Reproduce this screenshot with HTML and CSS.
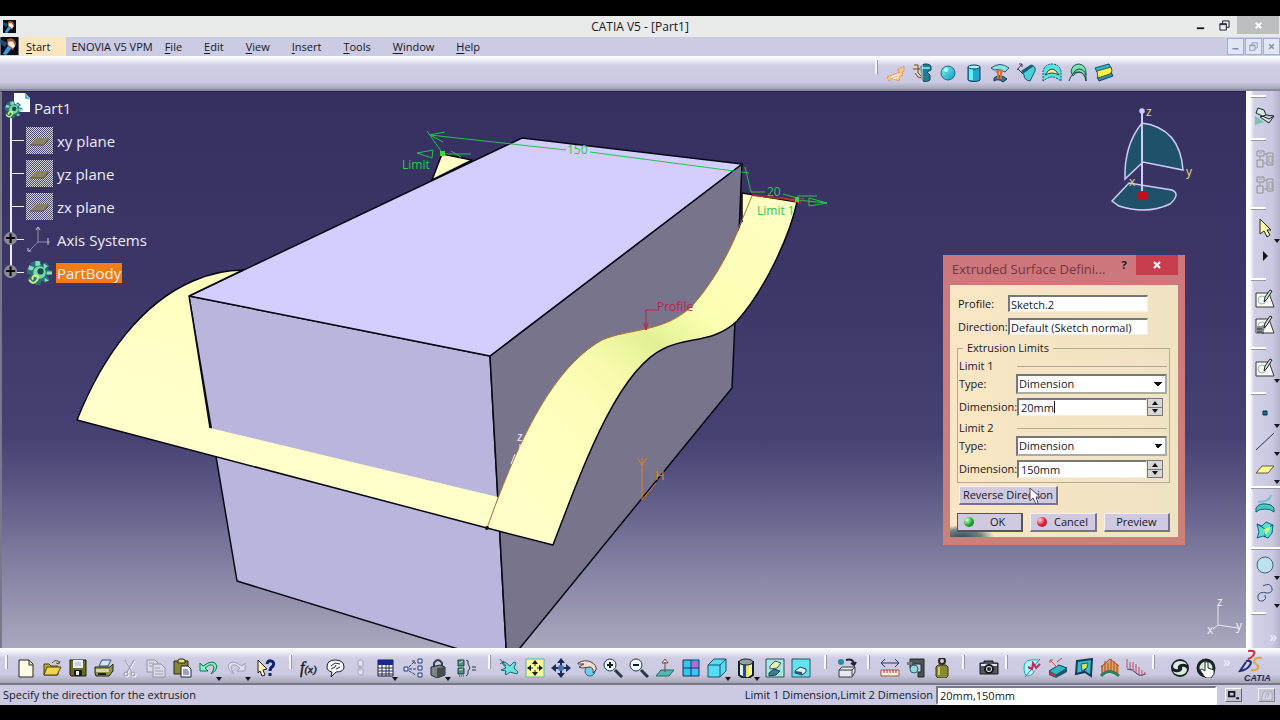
FILE: index.html
```html
<!DOCTYPE html>
<html lang="en">
<head>
<meta charset="utf-8">
<title>CATIA V5 - [Part1]</title>
<link rel="stylesheet" href="styles.css">
</head>
<body>
<svg class="sprite" aria-hidden="true">
  <defs>
    <linearGradient id="cyan" x1="0" y1="0" x2="1" y2="1"><stop offset="0" stop-color="#7ff4fa"/><stop offset="1" stop-color="#1596b8"/></linearGradient>
    <symbol id="app" viewBox="0 0 16 16"><rect width="16" height="16" fill="#070b16"/><path d="M0 2l6 3-2 4-4-3z" fill="#1a4a74"/><path d="M2 15 7 7l3 3-5 6z" fill="#3b9bdc"/><path d="M6 2c4-2 7 0 8 4l-3 6-5-5z" fill="#a8552f"/><path d="M7 4l4 0 2 4-2 2-4-3z" fill="#fff3e2"/></symbol>
    <symbol id="extrude" viewBox="0 0 20 20"><path d="M1 14 14 9l-3-2 7-4v5l-2 1 1 3-3 1-1 5-6-2-4 2z" fill="#f6c590" stroke="#ee8e3d" stroke-dasharray="2 1"/><path d="M5 14l9-3M7 16l6-2" stroke="#fff"/></symbol>
    <symbol id="revolve" viewBox="0 0 20 20"><path d="M9 4c0-4 10-4 10 0v3l-4 2 3 3v5c-3 2-7 2-8 0z" fill="#1d7f95" stroke="#173a4b"/><path d="M10 4h8v2h-8z" fill="#58dcee"/><path d="M1 6h7M2 2h4v8l5 5-5-1-3-4" fill="#f6d8a5" stroke="#5a4938"/><path d="M10 0v19" stroke="#e9eef5"/></symbol>
    <symbol id="sphere" viewBox="0 0 20 20"><circle cx="10" cy="10" r="7" fill="url(#cyan)" stroke="#176e83"/><circle cx="8" cy="7" r="2" fill="#c1ffff"/></symbol>
    <symbol id="cylinder" viewBox="0 0 20 20"><path d="M4 4v13c2 2 10 2 12 0V4" fill="#20a8cc" stroke="#0e3658"/><path d="M5 5h4v12H5z" fill="#64eef5"/><ellipse cx="10" cy="4" rx="6" ry="2" fill="#9bf9ff" stroke="#0e3658"/></symbol>
    <symbol id="offset" viewBox="0 0 20 20"><path d="M1 5Q10-2 19 5l-4 4Q10 5 4 7z" fill="#78e8ed" stroke="#355367"/><path d="M4 15q6-5 13 1l-4 3q-5-4-9-1z" fill="#267996" stroke="#173552"/><path d="M8 8v8m3-8v8M6 9l4-2 3 2" stroke="#d3703a" fill="none" stroke-width="2"/></symbol>
    <symbol id="sweep" viewBox="0 0 20 20"><path d="M1 7 6 1M3 1h3v3" stroke="#502d4d" fill="none"/><path d="M2 6l5 5" stroke="#2b3c53"/><path d="M6 8l9-6q5 1 4 6l-5 10q-6-1-6-6z" fill="#4cd0de" stroke="#175169"/><path d="M5 8l10-6 3 1-10 7z" fill="#1b5d78"/></symbol>
    <symbol id="fill" viewBox="0 0 20 20"><path d="M1 18V8q2-7 9-7t9 7v10l-3-2q-6-4-12 0z" fill="#54e2e6" stroke="#10516b" stroke-dasharray="2 1"/><path d="M3 12Q10 0 17 12q-7-4-14 0z" fill="#fff889" stroke="#353e31"/></symbol>
    <symbol id="multi" viewBox="0 0 20 20"><path d="M3 9Q4 1 11 1q7 1 7 9l0 8q-1-8-6-9-5 0-7 4z" fill="#7be0b1" stroke="#1b5b51"/><path d="M5 11q2-5 6-5 5 0 7 6M1 18q3-10 10-9 6 1 7 9" fill="none" stroke="#1b4b41"/></symbol>
    <symbol id="blend" viewBox="0 0 20 20"><path d="M1 5l14-4 2 4-14 4z" fill="#2cb7d9" stroke="#145171"/><path d="M3 14l14-5 2 4-14 5z" fill="#2a93ad" stroke="#12465b"/><path d="M3 8l14-4 1 4-2 3-12 4z" fill="#f6f24e" stroke="#52591b"/></symbol>
    <symbol id="new" viewBox="0 0 20 20"><path d="M3 2h10l4 4v13H3z" fill="#fffde6" stroke="#29281e"/><path d="M13 2v5h4" fill="#ddd" stroke="#29281e"/></symbol>
    <symbol id="open" viewBox="0 0 20 20"><path d="M2 17V6h5l2 2h7v9z" fill="#c8a824" stroke="#493e18"/><path d="M2 17 5 9h14l-4 8z" fill="#f0d64a" stroke="#493e18"/><path d="M10 5q3-4 6-2l1 2m-3 0 3 1 1-3" fill="none" stroke="#62542a"/></symbol>
    <symbol id="save" viewBox="0 0 20 20"><path d="M2 2h16v16H3l-1-1z" fill="#6b6b23" stroke="#171b16"/><path d="M5 2h10v8H5z" fill="#e8f2fb"/><path d="M6 12h8v6H6z" fill="#151a1c"/><path d="M8 13h3v4H8z" fill="#eee"/><path d="M7 5h6m-6 2h6" stroke="#a9b5bc"/></symbol>
    <symbol id="print" viewBox="0 0 20 20"><path d="M5 8l3-6h9l-3 6z" fill="#cfe5fa" stroke="#345168"/><path d="M1 9h15l3-3v7l-4 5H2l-1-3z" fill="#8f8f52" stroke="#24251f"/><path d="M2 11h13v3H2z" fill="#d7d6a0"/><path d="M4 16h8" stroke="#202020" stroke-width="2"/></symbol>
    <symbol id="cut" viewBox="0 0 20 20"><g fill="none" stroke="#fff" transform="translate(1 1)"><path d="M5 2l7 12M14 2 7 14"/><circle cx="6" cy="16" r="2"/><circle cx="13" cy="16" r="2"/></g><g fill="none" stroke="#9395aa"><path d="M5 2l7 12M14 2 7 14"/><circle cx="6" cy="16" r="2"/><circle cx="13" cy="16" r="2"/></g></symbol>
    <symbol id="copy" viewBox="0 0 20 20"><g fill="#dcdbeb" stroke="#9092a8"><path d="M1 2h8l3 3v9H1z"/><path d="M7 6h8l4 4v9H7z"/></g><path d="M9 10h5m-5 3h8m-8 3h8M3 5h5M3 8h3" stroke="#999bae"/></symbol>
    <symbol id="paste" viewBox="0 0 20 20"><path d="M2 3h14v13H2z" fill="#86863a" stroke="#262716"/><path d="M6 2l2-1h3l2 1v3H6z" fill="#e6dc78" stroke="#25251a"/><path d="M9 8h7l3 3v8H9z" fill="#f5f7ff" stroke="#1f2641"/><path d="M11 12h5m-5 2h6m-6 2h6" stroke="#465180"/></symbol>
    <symbol id="undo" viewBox="0 0 20 20"><path d="M2 5v8h8L7 10q7-6 9-1 0 3-3 7 6-3 6-8Q16 0 5 8z" fill="#7ff4bb" stroke="#127556"/></symbol>
    <symbol id="redo" viewBox="0 0 20 20"><path d="M18 5v8h-8l3-3Q6 4 4 9q0 3 3 7-6-3-6-8Q4 0 15 8z" fill="#dfdfee" stroke="#a1a2b6"/></symbol>
    <symbol id="whats" viewBox="0 0 20 20"><path d="M11 6q1-4 4-3 4 1 2 5-3 2-3 5m0 2v3" fill="none" stroke="#10216b" stroke-width="3"/><path d="M2 2l9 9-4 1 2 5-3 1-2-5-2 2z" fill="#fff6b3" stroke="#1d1e27"/></symbol>
    <symbol id="fx" viewBox="0 0 20 20"><text x="0" y="15" class="formula">f<tspan class="formula-arg">(x)</tspan></text></symbol>
    <symbol id="comment" viewBox="0 0 20 20"><path d="M2 9q0-7 8-7 9 0 9 7 0 5-8 5l-5 5 1-5q-5-1-5-5z" fill="#f7f8fc" stroke="#191d26"/><path d="M6 8l4-3 5 1M6 11l4-2 1-2m0 4 4-2" stroke="#26302e" fill="none"/></symbol>
    <symbol id="chain" viewBox="0 0 20 20"><g fill="#e3e2f0" stroke="#a3a5b7"><rect x="8" y="2" width="5" height="7" rx="2"/><rect x="8" y="10" width="5" height="7" rx="2"/><path d="M10 7v6"/></g></symbol>
    <symbol id="table" viewBox="0 0 20 20"><path d="M3 2h15v16H3z" fill="#fff" stroke="#151a3b"/><path d="M3 2h15v5H3z" fill="#172991"/><path d="M3 10h15M3 13h15M3 16h15M7 7v11m4-11v11m3-11v11" stroke="#242b4e"/></symbol>
    <symbol id="rules" viewBox="0 0 20 20"><path d="M1 9h4v4H1zM15 1h4v4h-4zM15 8h4v4h-4zM15 15h4v4h-4z" fill="#d5ddff" stroke="#2b407e" stroke-width="1"/><path d="M6 9l6-6M6 11h8m-8 2 7 4M9 3h3v3" stroke="#28404c" stroke-dasharray="3 1" fill="none"/></symbol>
    <symbol id="lock" viewBox="0 0 20 20"><path d="M6 9V5q4-6 8 0v4" fill="none" stroke="#3a4146" stroke-width="2"/><path d="M3 9l9-2 5 2v8l-8 3-6-3z" fill="#7c858a" stroke="#24272a"/><path d="M9 10l8-1v8l-8 3z" fill="#454d51"/></symbol>
    <symbol id="equiv" viewBox="0 0 20 20"><path d="M2 2h6v6H2zM2 10h6v6H2z" fill="#3f958c" stroke="#223e43"/><path d="M3 5l4-2m-4 9 4-1" stroke="#dfe56d"/><path d="M10 2q3 0 2 4l2 4-2 3q1 4-2 5m6-9h4m-4 3h4" fill="none" stroke="#2b343a"/><path d="M3 18h6" stroke="#26303a" stroke-dasharray="1 1"/></symbol>
    <symbol id="fly" viewBox="0 0 20 20"><path d="M2 12l5-2-4-5 3-1 5 4 4-4 2 1-2 5 4 4-1 2-7-2-4 3-1-1 1-3z" fill="#6de4db" stroke="#1d6572"/><path d="M1 1l6 7M1 6l4-3" stroke="#30597a"/></symbol>
    <symbol id="fit" viewBox="0 0 20 20"><path d="M1 1h18v18H1z" fill="#faf999" stroke="#5eb6a5"/><path d="M10 4v4m0 4v4M4 10h4m4 0h4" stroke="#161f26"/><path d="M10 2l3 4H7zM10 18l3-4H7zM2 10l4-3v6zM18 10l-4-3v6z" fill="#161f26"/></symbol>
    <symbol id="pan" viewBox="0 0 20 20"><path d="M10 2v16M2 10h16" stroke="#162c5e" stroke-width="2"/><path d="M10 0 6 5h8zM10 20l-4-5h8zM0 10l5-4v8zM20 10l-5-4v8z" fill="#162c5e"/><circle cx="10" cy="10" r="3" fill="#4672b3"/></symbol>
    <symbol id="rotate" viewBox="0 0 20 20"><circle cx="13" cy="13" r="5" fill="#72cee9" stroke="#1a6483"/><path d="M1 5q7-4 13-1 6 3 5 8l-3 3q1-5-3-6l-8 1-3-1 5-3H1z" fill="#f4ddd0" stroke="#56414a"/></symbol>
    <symbol id="zoomin" viewBox="0 0 20 20"><path d="M12 12l7 7" stroke="#28383e" stroke-width="3"/><circle cx="7" cy="7" r="6" fill="#edf9ff" stroke="#273c49" stroke-width="1"/><path d="M7 4v6M4 7h6" stroke="#12191c" stroke-width="2"/></symbol>
    <symbol id="zoomout" viewBox="0 0 20 20"><path d="M12 12l7 7" stroke="#28383e" stroke-width="3"/><circle cx="7" cy="7" r="6" fill="#edf9ff" stroke="#273c49" stroke-width="1"/><path d="M4 7h6" stroke="#12191c" stroke-width="2"/></symbol>
    <symbol id="normal" viewBox="0 0 20 20"><path d="M1 18l5-6h13l-5 6z" fill="#53b9ac" stroke="#236966"/><path d="M10 14V4M7 5l3-4 3 4z" fill="#fff" stroke="#754548"/></symbol>
    <symbol id="quad" viewBox="0 0 20 20"><path d="M2 2h16v16H2z" fill="#34c8ee" stroke="#142c68"/><path d="M11 3h6v6h-6z" fill="#b46ad3"/><path d="M10 2v16M2 10h16" stroke="#142c68"/></symbol>
    <symbol id="iso" viewBox="0 0 20 20"><path d="M1 7l6-6h12v12l-6 6H1z" fill="#55ddf5" stroke="#155267"/><path d="M1 7h12v12M13 7l6-6" stroke="#155267" fill="none"/></symbol>
    <symbol id="shade" viewBox="0 0 20 20"><path d="M3 4v13l3 2h8l3-2V4z" fill="#dff8d8" stroke="#161c21" stroke-width="2"/><path d="M7 6h3v13H7z" fill="#2340c4"/><path d="M10 6h3v13h-3z" fill="#f2e94b"/><ellipse cx="10" cy="4" rx="7" ry="3" fill="#91a2a3" stroke="#161c21"/></symbol>
    <symbol id="hide" viewBox="0 0 20 20"><path d="M1 1h18v18H1z" fill="#a5e9df" stroke="#294e54"/><path d="M5 8l5-5 6 2-4 5-7 1z" fill="#f4efb4" stroke="#405d52"/><path d="M4 15l5-4 6 2-4 4-7 1z" fill="#357f91" stroke="#214251"/></symbol>
    <symbol id="swap" viewBox="0 0 20 20"><path d="M1 1h18v18H1z" fill="#62e4ee" stroke="#295363"/><path d="M4 13l5-4 6 2v3l-4 3-7-2z" fill="#dceff1" stroke="#263e57"/><path d="M4 13l7 1v3l-7-2z" fill="#2b5870"/></symbol>
    <symbol id="copyprint" viewBox="0 0 20 20"><circle cx="4" cy="4" r="3" fill="#268aa0"/><path d="M9 2q7-2 8 4m-3-1 3 2 2-3" fill="none" stroke="#1c252c" stroke-width="2"/><path d="M2 12l3-3h13v5l-3 5H2z" fill="#e7e9ee" stroke="#35393d"/><path d="M2 12h13v6m0-6 3-3" fill="none" stroke="#35393d"/></symbol>
    <symbol id="measure" viewBox="0 0 20 20"><path d="M1 5h18M5 1 1 5l4 4M15 1l4 4-4 4" fill="none" stroke="#26366a" stroke-width="1"/><path d="M1 12h18v6H1z" fill="#fbeeda" stroke="#a45249"/><path d="M4 12v3m3-3v3m3-3v3m3-3v3m3-3v3" stroke="#a13b3b"/></symbol>
    <symbol id="caliper" viewBox="0 0 20 20"><path d="M4 1h14v18h-6v-5h3V6H8v4H4z" fill="#4b555a" stroke="#22262a"/><circle cx="8" cy="11" r="4" fill="#92d7d9" stroke="#245d6a"/><path d="M1 4h5v3H1z" fill="#727c82"/></symbol>
    <symbol id="weight" viewBox="0 0 20 20"><circle cx="10" cy="3" r="3" fill="none" stroke="#2c2c18" stroke-width="2"/><path d="M6 7h8l2 2v9l-2 2H6l-2-2V9z" fill="#898833" stroke="#36340f"/><path d="M7 9v8" stroke="#d1ce71" stroke-width="2"/></symbol>
    <symbol id="camera" viewBox="0 0 20 20"><path d="M1 5h4V3h9v2h5v11H1z" fill="#53575e" stroke="#16181b"/><path d="M2 6h16v2H2z" fill="#e1e4e7"/><circle cx="10" cy="11" r="4" fill="#dfe6e7" stroke="#13191c" stroke-width="2"/><circle cx="10" cy="11" r="2" fill="#222b37"/></symbol>
    <symbol id="connect" viewBox="0 0 20 20"><path d="M16 2Q2 0 2 9t4 9q6-1 6-6" fill="#b1fbfb" stroke="#29a6b0"/><path d="M3 19 18 1" stroke="#327f9a"/><path d="M6 9l4 2 1-6 3 5 4-4" fill="none" stroke="#b3305e" stroke-width="2"/></symbol>
    <symbol id="draft" viewBox="0 0 20 20"><path d="M1 13l10-6 8 3-11 7z" fill="#2fb8c1" stroke="#173e55"/><path d="M1 13l7 4v3l-7-3zM8 17l11-7v4L8 20z" fill="#22566f"/><path d="M2 15l6 3" stroke="#b63c40" stroke-width="2"/><path d="M2 2l7 7m0-5 5-4M2 2h3M2 2v3" stroke="#c2553b"/></symbol>
    <symbol id="map" viewBox="0 0 20 20"><path d="M3 3l15-2-1 17-6-4-9 2z" fill="#33b9c9" stroke="#163a52" stroke-width="2"/><path d="M7 6l7-1-1 5-5 3z" fill="#cde75d" stroke="#2752a0"/><path d="M3 16q7-2 9-5" fill="none" stroke="#122e7c"/></symbol>
    <symbol id="porcupine" viewBox="0 0 20 20"><path d="M1 17V8l9-6 9 6v9q-9-7-18 0z" fill="#e2a45e"/><path d="M1 18q8-9 18 0" stroke="#24805d" fill="none" stroke-width="3"/><path d="M2 15V7m3 7V3m3 9V5m3 7V1m3 12V3m3 12V6M1 9l9-8 9 7" fill="none" stroke="#a9492a"/></symbol>
    <symbol id="comb" viewBox="0 0 20 20"><path d="M1 11q6 0 9 4 4 4 9 1" fill="none" stroke="#3d2d4a"/><path d="M1 10V1m3 11V4m3 8V4m3 11V6m3 10V9m3 8v-5m3 5v-3" stroke="#bb4964"/></symbol>
    <symbol id="update" viewBox="0 0 20 20"><circle cx="10" cy="10" r="9" fill="#17212a"/><path d="M3 9q0-5 6-6 7 0 8 4-2-2-6-1-4 1-3 5-3 1-5-2zM17 11q0 5-6 6-7 0-8-4 2 2 6 1 4-1 3-5 3-1 5 2z" fill="#dceadb"/></symbol>
    <symbol id="manual" viewBox="0 0 20 20"><circle cx="10" cy="10" r="8" fill="#d7ecd6" stroke="#172322" stroke-width="3"/><path d="M8 18 4 12l2-1 3 2V4h3v6l6 2v4l-3 4h-5z" fill="#fff" stroke="#25292b"/></symbol>
    <symbol id="workbench" viewBox="0 0 20 20"><path d="M0 10v9l9-3z" fill="#7bc3ac"/><path d="M1 7 3 2l6 2 2 5 8 1-5 3-9-4zM11 9 5 11l9 6 5-7" fill="#d8e8df" stroke="#172523"/></symbol>
    <symbol id="body" viewBox="0 0 20 20"><path d="M2 2h7v5H2zm10 2h6v12h-6zM2 11h6v7H2z" fill="#d2d1dc" stroke="#8e8f9c"/><path d="M4 4h3M9 5h3M5 7v4m3 3h4m2-7h3v7h-3z" stroke="#999aa7" fill="none"/></symbol>
    <symbol id="select" viewBox="0 0 20 20"><path d="M5 1v15l4-3 3 6 3-2-3-5h4z" fill="#fff5a6" stroke="#26271f"/></symbol>
    <symbol id="play" viewBox="0 0 20 20"><path d="M8 5l5 5-5 5z" fill="#17171d"/></symbol>
    <symbol id="sketch" viewBox="0 0 20 20"><path d="M1 4h13l5 14H1z" fill="#f8f9f7" stroke="#323a37"/><circle cx="7" cy="11" r="4" fill="none" stroke="#99b8ad"/><path d="M9 13l1-5 5-7 2 1-5 8z" fill="#cddad5" stroke="#1d2b29"/></symbol>
    <symbol id="positioned" viewBox="0 0 20 20"><use href="#sketch"/><path d="M1 11h6v8H1z" fill="#8c9190"/><path d="M8 10v9M2 14h5m-5 3h5" stroke="#222c2c"/></symbol>
    <symbol id="point" viewBox="0 0 20 20"><path d="M8 8h4v4H8z" fill="#08787b" stroke="#12294a"/></symbol>
    <symbol id="line" viewBox="0 0 20 20"><path d="M1 19 19 2" stroke="#25344d"/></symbol>
    <symbol id="plane" viewBox="0 0 20 20"><path d="M1 14l6-7h12l-6 7z" fill="#fbfb9a" stroke="#62602b"/></symbol>
    <symbol id="extract" viewBox="0 0 20 20"><path d="M1 18v-4q3-5 10-4 6 0 8 4v4q-3-3-9-3-6 0-9 3z" fill="#46c7bf" stroke="#17646c"/><path d="M3 8q12 0 13-7" fill="none" stroke="#84bdd0" stroke-width="2"/></symbol>
    <symbol id="join" viewBox="0 0 20 20"><path d="M2 4l5 2 4-4 7 3-1 8-4 5-5-2-6 2 2-6z" fill="#50e5cb" stroke="#126285"/><path d="M2 4l8 5 8-4m-8 4v8" stroke="#1d4dab" fill="none"/><path d="M9 9l6-3v4l-5 5z" fill="#bef88c"/></symbol>
    <symbol id="circle" viewBox="0 0 20 20"><circle cx="10" cy="10" r="8" fill="#bfe0ef" stroke="#3b6580"/></symbol>
    <symbol id="spline" viewBox="0 0 20 20"><path d="M8 3q7-4 9 2 1 5-5 5-8-2-9 3-1 6 5 5 4-2 2-6" fill="none" stroke="#34557d"/></symbol>
    <symbol id="min" viewBox="0 0 12 12"><path d="M2 8h8v2H2z" fill="currentColor"/></symbol>
    <symbol id="max" viewBox="0 0 12 12"><path d="M4 4V1h7v7H8M1 4h7v7H1zM1 5h7" fill="none" stroke="currentColor"/></symbol>
    <symbol id="close" viewBox="0 0 12 12"><path d="M3 3l6 6m0-6-6 6" stroke="currentColor" stroke-width="2"/></symbol>
    <symbol id="gear" viewBox="0 0 26 26"><path d="M9 2h5l1 4 4-3 4 4-3 3 5 1v4l-5 1 3 4-4 3-4-2-1 4H9l-1-4-4 2-3-4 4-3-4-2V9l5-1-2-4 4-2z" fill="#2c6f74"/><path d="M9 2h4l1 4-5 1zM3 6l5 2-2 3-4-1zM17 4l4 3-4 3zM20 12h5v3h-5zM18 18l4 3-4 1z" fill="#7fe0bd"/><circle cx="13" cy="13" r="6" fill="#77dba8"/><circle cx="14" cy="12" r="3" fill="#174953"/><path d="M3 20q4 6 8 0 2-5-3-4-3 2-1 4" fill="none" stroke="#c5ef7e" stroke-width="2"/></symbol>
    <pattern id="mesh" width="2" height="2" patternUnits="userSpaceOnUse"><rect width="1" height="1" fill="#d3d3de"/><rect x="1" y="1" width="1" height="1" fill="#d3d3de"/></pattern>
    <symbol id="treeplane" viewBox="0 0 27 27"><rect width="27" height="27" fill="#4f4c6c"/><rect width="27" height="27" fill="url(#mesh)"/><path d="M4 18l6-7h13l-5 7z" fill="#898263"/><path d="M4 18h14l5-7" stroke="#55514c" fill="none"/></symbol>
    <symbol id="treeaxis" viewBox="0 0 27 27"><path d="M12 1v15h12M12 16 3 25" fill="none" stroke="#8f8e9e"/><path d="M10 4l2-3 2 3m8 8v7M2 22v3h3" fill="none" stroke="#c9c8d5"/></symbol>
  </defs>
</svg>

<div class="window">
  <header class="titlebar">
    <svg class="titlebar-icon"><use href="#app"/></svg>
    <h1 class="titlebar-text">CATIA V5 - [Part1]</h1>
    <div class="window-buttons">
      <button class="win-btn" aria-label="Minimize"><svg><use href="#min"/></svg></button>
      <button class="win-btn" aria-label="Restore"><svg><use href="#max"/></svg></button>
      <button class="win-btn win-close" aria-label="Close"><svg><use href="#close"/></svg></button>
    </div>
  </header>

  <nav class="menubar" aria-label="Main menu">
    <svg class="menu-icon"><use href="#app"/></svg>
    <button class="menu menu-start"><u>S</u>tart</button>
    <button class="menu menu-vpm">ENOVIA V5 VPM</button>
    <button class="menu"><u>F</u>ile</button>
    <button class="menu"><u>E</u>dit</button>
    <button class="menu"><u>V</u>iew</button>
    <button class="menu"><u>I</u>nsert</button>
    <button class="menu"><u>T</u>ools</button>
    <button class="menu"><u>W</u>indow</button>
    <button class="menu"><u>H</u>elp</button>
    <div class="child-buttons">
      <button class="child-btn" aria-label="Minimize document"><svg><use href="#min"/></svg></button>
      <button class="child-btn" aria-label="Restore document"><svg><use href="#max"/></svg></button>
      <button class="child-btn" aria-label="Close document"><svg><use href="#close"/></svg></button>
    </div>
  </nav>

  <div class="toolbar toolbar-top">
    <div class="group group-surfaces">
      <button class="tool" aria-label="Extrude"><svg><use href="#extrude"/></svg></button>
      <button class="tool" aria-label="Revolve"><svg><use href="#revolve"/></svg></button>
      <button class="tool" aria-label="Sphere"><svg><use href="#sphere"/></svg></button>
      <button class="tool" aria-label="Cylinder"><svg><use href="#cylinder"/></svg></button>
      <button class="tool" aria-label="Offset"><svg><use href="#offset"/></svg></button>
      <button class="tool" aria-label="Sweep"><svg><use href="#sweep"/></svg></button>
      <button class="tool" aria-label="Fill"><svg><use href="#fill"/></svg></button>
      <button class="tool" aria-label="Multi-sections surface"><svg><use href="#multi"/></svg></button>
      <button class="tool" aria-label="Blend"><svg><use href="#blend"/></svg></button>
    </div>
  </div>

  <div class="workspace">
    <main class="viewport">
      <svg class="scene" viewBox="2 92 1244 556" preserveAspectRatio="xMinYMin slice" aria-label="3D view of the part">
        <defs>
          <linearGradient id="ribbon" gradientUnits="userSpaceOnUse" x1="770" y1="220" x2="520" y2="520">
            <stop offset="0" stop-color="#ffffc2"/><stop offset="0.3" stop-color="#fbffb0"/><stop offset="0.43" stop-color="#e2f095"/><stop offset="0.56" stop-color="#f7fbac"/><stop offset="0.7" stop-color="#ffffbc"/><stop offset="1" stop-color="#ffffc8"/>
          </linearGradient>
          <linearGradient id="wing" x1="0.8" y1="0" x2="0.4" y2="0.7"><stop offset="0" stop-color="#ebf3a8"/><stop offset="0.4" stop-color="#ffffc0"/><stop offset="1" stop-color="#ffffcc"/></linearGradient>
        </defs>
        <g stroke="#080812" stroke-width="1.5" stroke-linejoin="round">
          <path d="M442 154 472 160 432 180z" fill="#fdffc4"/>
          <path d="M189 296 490 356 507 664 237 581z" fill="#b9b5dc"/>
          <path d="M490 356 742 164 732 388 520 648 507 664z" fill="#77748c"/>
          <path d="M522 138 742 164 490 356 189 296z" fill="#d2ceff"/>
          <path d="M77 420C104 352 144 302 193 281Q218 270 243 270L189 296 210 428 498 497 487 528z" fill="url(#wing)" stroke="none"/>
          <path d="M210 428 189 296 243 270Q218 270 193 281C144 302 104 352 77 420L487 528" fill="none"/>
          <path d="M742 193 797 202C790 235 765 290 737 321 714 343 688 337 665 348 618 369 584 464 553 545L487 528C515 450 549 370 602 340 630 328 665 333 693 305 720 275 735 240 742 222z" fill="url(#ribbon)" stroke="none"/>
          <path d="M742 222V193L797 202C790 235 765 290 737 321 714 343 688 337 665 348 618 369 584 464 553 545L487 528" fill="none"/>
        </g>
        <path d="M487 528C515 450 549 370 602 340 630 328 665 333 693 305 720 275 738 230 752 196" fill="none" stroke="#b17030"/>
        <circle cx="487" cy="528" r="2" fill="#111"/>
        <g fill="none" stroke="#26c04c">
          <path d="M430 135 566 150M590 152 749 173M427 131l14 20M430 135l15-3m-15 3 13 7M417 153l16-3-1 8zM441 154h30m-20-3 10 6M745 167l6 25h14m18 2 14 4M797 196h20M797 200l30 3m-18-5 18 5-18 3z"/>
          <path d="M752 195l44 5" stroke="#9d302b" stroke-width="2"/>
          <path d="M780 197l20 6 4-5-15 2" stroke="#ba382d"/>
        </g>
        <path d="M440 151h5v5h-5zM795 197h4v5h-4z" fill="#31df39"/>
        <g class="dimension"><text x="402" y="169">Limit</text><text x="567" y="154">150</text><text x="767" y="196">20</text><text x="757" y="215">Limit 1</text></g>
        <path d="M657 310h-11v20m-2-7 2 7 2-7" fill="none" stroke="#c31d47"/>
        <text class="profile" x="657" y="311">Profile</text>
        <g stroke="#e47b25" fill="none"><path d="M642 500v-42m-5 0 5 7 5-7m-5 42 14-17"/></g>
        <text class="sketch-axis" x="655" y="480">H</text>
        <text class="axis-label" x="517" y="441">z</text>
        <path d="M520 444v7m-5 3-4 10" stroke="#f7f5e8"/>
        <g stroke="#ceccf5" stroke-width="1.5" fill="#20516b">
          <path d="M1142 123Q1180 128 1183 170L1143 162 1125 179Q1124 145 1142 123z"/>
          <path d="M1112 201 1129 183 1172 190Q1181 194 1170 204 1147 215 1119 206z"/>
          <path d="M1142 111v82" fill="none" stroke-width="2"/><circle cx="1142" cy="111" r="2" fill="#d5d3ff"/>
        </g>
        <rect x="1138" y="191" width="9" height="9" fill="#c1101c"/>
        <g class="compass"><text x="1146" y="116">z</text><text x="1186" y="176">y</text><text x="1129" y="186">x</text></g>
        <path d="M1218 606v19l20 3m-20-3-5 4" fill="none" stroke="#e9e8f3"/>
        <g class="axis-label"><text x="1217" y="606">z</text><text x="1236" y="630">y</text><text x="1207" y="634">x</text></g>
      </svg>

      <ul class="tree">
        <li class="node node-root"><svg class="root-icon" viewBox="0 0 28 28"><path d="M11 1h11l5 5v14H11z" fill="#f7fcff"/><path d="M22 1v6h5z" fill="#53b8d5"/><use href="#gear" x="1" y="8" width="19" height="19"/></svg><span class="node-text">Part1</span></li>
        <li class="node"><svg class="node-icon"><use href="#treeplane"/></svg><span class="node-text">xy plane</span></li>
        <li class="node"><svg class="node-icon"><use href="#treeplane"/></svg><span class="node-text">yz plane</span></li>
        <li class="node"><svg class="node-icon"><use href="#treeplane"/></svg><span class="node-text">zx plane</span></li>
        <li class="node node-closed"><svg class="node-icon"><use href="#treeaxis"/></svg><span class="node-text">Axis Systems</span></li>
        <li class="node node-closed"><svg class="node-icon"><use href="#gear"/></svg><span class="node-text node-active">PartBody</span></li>
      </ul>

      <form class="dialog" role="dialog" aria-labelledby="dialog-title">
        <div class="dialog-head">
          <h2 class="dialog-title" id="dialog-title">Extruded Surface Defini...</h2>
          <button type="button" class="dialog-help" aria-label="Help">?</button>
          <button type="button" class="dialog-close" aria-label="Close dialog"><svg><use href="#close"/></svg></button>
        </div>
        <div class="dialog-body">
          <div class="row-top"><label for="profile">Profile:</label><input class="box" id="profile" type="text" value="Sketch.2"></div>
          <div class="row-top"><label for="direction">Direction:</label><input class="box" id="direction" type="text" value="Default (Sketch normal)"></div>
          <fieldset class="limits">
            <legend>Extrusion Limits</legend>
            <div class="limit-head">Limit 1</div>
            <div class="row"><label for="type1">Type:</label><select class="box" id="type1"><option>Dimension</option></select></div>
            <div class="row row-value"><label for="dim1">Dimension:</label><span class="spinner"><input class="box" id="dim1" type="text" value="20mm"><i class="caret"></i><span class="steps"><button type="button" class="step" aria-label="Increase limit 1"></button><button type="button" class="step step-down" aria-label="Decrease limit 1"></button></span></span></div>
            <div class="limit-head">Limit 2</div>
            <div class="row"><label for="type2">Type:</label><select class="box" id="type2"><option>Dimension</option></select></div>
            <div class="row row-value"><label for="dim2">Dimension:</label><span class="spinner"><input class="box" id="dim2" type="text" value="150mm"><span class="steps"><button type="button" class="step" aria-label="Increase limit 2"></button><button type="button" class="step step-down" aria-label="Decrease limit 2"></button></span></span></div>
          </fieldset>
          <button type="button" class="push push-reverse">Reverse Direction</button>
          <div class="actions">
            <button type="button" class="push push-default"><i class="lamp lamp-green"></i><span>OK</span></button>
            <button type="button" class="push"><i class="lamp lamp-red"></i><span>Cancel</span></button>
            <button type="button" class="push">Preview</button>
          </div>
        </div>
        <svg class="pointer" viewBox="0 0 12 18"><path d="M1 1v13l3-3 3 6 2-1-2-6h4z" fill="#fff" stroke="#504b5c"/></svg>
      </form>
    </main>

    <aside class="sidebar" aria-label="Workbench tools">
      <div class="stack"><button class="tool" aria-label="Generative shape design"><svg><use href="#workbench"/></svg></button></div>
      <div class="stack"><button class="tool" aria-label="Body"><svg><use href="#body"/></svg></button><button class="tool" aria-label="Geometrical set"><svg><use href="#body"/></svg></button></div>
      <div class="stack"><button class="tool drop" aria-label="Select"><svg><use href="#select"/></svg></button><button class="tool" aria-label="Selection filter"><svg><use href="#play"/></svg></button></div>
      <div class="stack"><button class="tool" aria-label="Sketch"><svg><use href="#sketch"/></svg></button><button class="tool" aria-label="Positioned sketch"><svg><use href="#positioned"/></svg></button></div>
      <div class="stack"><button class="tool drop" aria-label="Sketcher"><svg><use href="#sketch"/></svg></button></div>
      <div class="stack stack-tight"><button class="tool drop" aria-label="Point"><svg><use href="#point"/></svg></button><button class="tool drop" aria-label="Line"><svg><use href="#line"/></svg></button><button class="tool drop" aria-label="Plane"><svg><use href="#plane"/></svg></button></div>
      <div class="stack stack-full"><button class="tool" aria-label="Extract"><svg><use href="#extract"/></svg></button><button class="tool" aria-label="Join"><svg><use href="#join"/></svg></button></div>
      <div class="stack stack-full"><button class="tool drop" aria-label="Circle"><svg><use href="#circle"/></svg></button><button class="tool drop" aria-label="Spline"><svg><use href="#spline"/></svg></button></div>
      <div class="stack stack-last"><span class="more">»</span></div>
    </aside>
  </div>

  <div class="toolbar toolbar-bottom">
    <div class="group">
      <button class="tool" aria-label="New"><svg><use href="#new"/></svg></button><button class="tool" aria-label="Open"><svg><use href="#open"/></svg></button><button class="tool" aria-label="Save"><svg><use href="#save"/></svg></button><button class="tool" aria-label="Print"><svg><use href="#print"/></svg></button><button class="tool" aria-label="Cut"><svg><use href="#cut"/></svg></button><button class="tool" aria-label="Copy"><svg><use href="#copy"/></svg></button><button class="tool" aria-label="Paste"><svg><use href="#paste"/></svg></button><button class="tool drop" aria-label="Undo"><svg><use href="#undo"/></svg></button><button class="tool drop" aria-label="Redo"><svg><use href="#redo"/></svg></button><button class="tool" aria-label="What's this"><svg><use href="#whats"/></svg></button>
    </div>
    <div class="group group-knowledge">
      <button class="tool" aria-label="Formula"><svg><use href="#fx"/></svg></button><button class="tool" aria-label="Comment"><svg><use href="#comment"/></svg></button><button class="tool" aria-label="Check links"><svg><use href="#chain"/></svg></button><button class="tool drop" aria-label="Design table"><svg><use href="#table"/></svg></button><button class="tool" aria-label="Rules"><svg><use href="#rules"/></svg></button><button class="tool drop" aria-label="Lock"><svg><use href="#lock"/></svg></button><button class="tool" aria-label="Equivalent dimensions"><svg><use href="#equiv"/></svg></button>
    </div>
    <div class="group">
      <button class="tool" aria-label="Fly"><svg><use href="#fly"/></svg></button><button class="tool" aria-label="Fit all in"><svg><use href="#fit"/></svg></button><button class="tool" aria-label="Pan"><svg><use href="#pan"/></svg></button><button class="tool" aria-label="Rotate"><svg><use href="#rotate"/></svg></button><button class="tool" aria-label="Zoom in"><svg><use href="#zoomin"/></svg></button><button class="tool" aria-label="Zoom out"><svg><use href="#zoomout"/></svg></button><button class="tool" aria-label="Normal view"><svg><use href="#normal"/></svg></button><button class="tool" aria-label="Multi-view"><svg><use href="#quad"/></svg></button><button class="tool drop" aria-label="Isometric view"><svg><use href="#iso"/></svg></button><button class="tool drop" aria-label="Shading"><svg><use href="#shade"/></svg></button><button class="tool" aria-label="Hide or show"><svg><use href="#hide"/></svg></button><button class="tool" aria-label="Swap visible space"><svg><use href="#swap"/></svg></button>
    </div>
    <div class="group group-mid"><button class="tool" aria-label="Quick print"><svg><use href="#copyprint"/></svg></button></div>
    <div class="group group-mid"><button class="tool" aria-label="Measure between"><svg><use href="#measure"/></svg></button><button class="tool" aria-label="Measure item"><svg><use href="#caliper"/></svg></button><button class="tool" aria-label="Measure inertia"><svg><use href="#weight"/></svg></button></div>
    <div class="group group-far"><button class="tool" aria-label="Capture"><svg><use href="#camera"/></svg></button></div>
    <div class="group group-far"><button class="tool" aria-label="Connect checker"><svg><use href="#connect"/></svg></button><button class="tool" aria-label="Draft analysis"><svg><use href="#draft"/></svg></button><button class="tool" aria-label="Surface curvature"><svg><use href="#map"/></svg></button><button class="tool" aria-label="Porcupine analysis"><svg><use href="#porcupine"/></svg></button><button class="tool" aria-label="Curvature comb"><svg><use href="#comb"/></svg></button></div>
    <div class="group group-far group-update"><button class="tool" aria-label="Update all"><svg><use href="#update"/></svg></button><button class="tool" aria-label="Manual update"><svg><use href="#manual"/></svg></button><span class="more">»</span></div>
    <svg class="brand" viewBox="0 0 42 34" aria-label="CATIA"><path d="M10 2q8-1 6 3-1 3-6 5" fill="none" stroke="#c72e3d" stroke-width="2"/><path d="M8 12q7-1 4 4-3 5-10 6l6-9" fill="none" stroke="#272b72" stroke-width="2"/><path d="M24 9q-8-1-8 4l4 4q1 5-7 4" fill="none" stroke="#e2a83b" stroke-width="2"/><text class="brand-text" x="6" y="32">CATIA</text></svg>
  </div>

  <footer class="status">
    <span class="status-message">Specify the direction for the extrusion</span>
    <label class="status-label" for="power">Limit 1 Dimension,Limit 2 Dimension</label>
    <input class="power" id="power" type="text" value="20mm,150mm">
    <button class="status-btn" aria-label="Power input"><svg viewBox="0 0 14 12"><path d="M2 2h6v5H2zM10 9h3" fill="none" stroke="#16171c" stroke-width="2"/></svg></button>
    <button class="status-btn status-off" aria-label="Macro"><svg viewBox="0 0 14 12"><path d="M1 11 4 2h9v9zM5 9l2-5h3L8 9" fill="#dddde9" stroke="#9799a9"/></svg></button>
  </footer>
</div>
</body>
</html>
```
FILE: styles.css
```css
* { box-sizing: border-box; }
body {
  margin: 0;
  background: #000;
  color: #171725;
  font: 11px/16px "Open Sans", "Noto Sans", sans-serif;
}
button, input, select { font: inherit; color: inherit; margin: 0; border-radius: 0; }
button { border: 0; padding: 0; background: none; }
.sprite { position: absolute; width: 0; height: 0; }
.window { display: flex; flex-direction: column; height: 100vh; padding: 16px 0 15px; }

.titlebar { display: flex; align-items: center; height: 21px; flex: none; background: #e9eaea; padding-left: 3px; }
.titlebar-icon { width: 13px; height: 13px; }
.titlebar-text { flex: 1; margin: 0; padding-left: 76px; font-size: 12px; font-weight: 400; text-align: center; }
.window-buttons { display: flex; align-self: flex-start; }
.win-btn { width: 24px; height: 18px; display: grid; place-items: center; }
.win-btn svg { width: 11px; height: 11px; }
.win-close { width: 42px; margin-left: 1px; margin-right: 1px; background: #bdbebf; color: #fff; }

.menubar { display: flex; flex: none; height: 19px; background: #cbcbe4; }
.menu-icon { width: 19px; height: 18px; }
.menu { padding: 0 11px; line-height: 18px; }
.menu u { text-underline-offset: 2px; }
.menu-start { background: #fbe6bf; padding: 0 15px 0 7px; }
.menu-vpm { padding: 0 1px 0 6px; }
.child-buttons { display: flex; gap: 1px; margin-left: auto; padding-top: 1px; }
.child-btn { width: 17px; height: 17px; display: grid; place-items: center; color: #808bad; background: #e1e6f5; border: 1px solid #a1afd1; }
.child-btn svg { width: 9px; height: 9px; }

.toolbar { display: flex; align-items: flex-start; flex: none; background: linear-gradient(#fff, #eeeef7 4px, #cfcde4 10px, #cbcae2 26px, #a5a5b6); }
.toolbar-top { height: 35px; padding-top: 4px; border-bottom: 2px solid #8a8a9a; }
.toolbar-bottom { height: 37px; padding: 7px 0 0 5px; border-bottom: 2px solid #777887; }
.group { position: relative; display: flex; padding-left: 8px; margin-right: 10px; }
.group::before { content: ""; position: absolute; left: 0; top: 0; width: 2px; height: 14px; background: #f6f6fc; border-right: 1px solid #9797a9; }
.group-surfaces { margin-left: auto; margin-right: 163px; }
.tool { position: relative; flex: none; width: 26px; height: 26px; display: grid; place-items: center; }
.tool svg { width: 20px; height: 20px; }
.toolbar .drop { width: 29px; padding-right: 3px; }
.drop::after { content: ""; position: absolute; right: 2px; bottom: 0; border: 3px solid transparent; border-top: 4px solid #15151c; border-bottom: 0; }
.group-knowledge .tool { width: 25px; }
.group-knowledge .drop { width: 28px; }
.group-mid { padding-left: 10px; margin-right: 7px; }
.group-far { padding-left: 14px; margin-right: 3px; }
.group-update { padding-left: 15px; margin-right: 0; flex: 1; }
.more { color: #f4f4fc; font-size: 15px; line-height: 12px; }
.group-update .more { padding-left: 4px; }
.formula { font: italic 16px "Liberation Serif", serif; fill: #15151c; stroke: #15151c; stroke-width: 0.4px; }
.formula-arg { font-size: 11px; }
.brand { width: 42px; height: 34px; margin: -6px 0 0; overflow: visible; }
.brand-text { font: italic bold 9px "Liberation Sans", sans-serif; fill: #252a62; }

.workspace { display: flex; flex: 1; min-height: 0; }
.viewport { position: relative; flex: 1; min-width: 0; overflow: hidden; border-left: 2px solid #777888; border-top: 1px solid #25214a; background: linear-gradient(#363061, #3d3769 35%, #454173 62%, #5a5783 71%, #8583a3 86%, #a9a8bf); }
.scene { position: absolute; inset: 0; width: 100%; height: 100%; }
.scene text { font-family: "Open Sans", "Noto Sans", sans-serif; }
.dimension { font-size: 12px; fill: #2dc74b; }
.profile { font-size: 12px; fill: #c51d49; }
.sketch-axis { font-size: 13px; fill: #e47b25; }
.compass { font-size: 12px; fill: #e2de7a; }
.axis-label { font-size: 12px; fill: #f0eff8; }

.tree { position: relative; display: inline-block; margin: -1px 0 0; padding: 0 0 0 4px; list-style: none; color: #ededf7; font-size: 15px; line-height: 20px; }
.tree::before { content: ""; position: absolute; left: 8px; top: 26px; bottom: 16px; width: 2px; background: #ededf7; }
.node { position: relative; display: flex; align-items: center; height: 33px; padding-left: 20px; gap: 3px; }
.node::before { content: ""; position: absolute; left: 5px; top: 16px; width: 13px; height: 1px; background: #ededf7; }
.node-root { padding-left: 0; gap: 2px; }
.node-root::before { display: none; }
.node-icon { width: 27px; height: 27px; }
.root-icon { width: 28px; height: 28px; margin: 0 0 4px -3px; }
.node-closed::after { content: "+"; position: absolute; left: -2px; top: 9px; width: 13px; height: 13px; border-radius: 50%; background: #8a8a96; color: #050509; font: bold 18px/12px "Liberation Sans", sans-serif; text-align: center; }
.node-text { padding: 0 1px; }
.node-active { background: #f27d17; }

.dialog { position: absolute; top: 163px; right: 61px; width: 242px; padding: 0 7px 8px; background: linear-gradient(#cd777c, #c9827a); }
.dialog-head { display: flex; height: 30px; }
.dialog-title { flex: 1; margin: 0; padding: 6px 0 0 2px; color: #7b333d; font-size: 13px; line-height: 17px; font-weight: 400; white-space: nowrap; }
.dialog-help { width: 24px; height: 20px; font-weight: 700; }
.dialog-close { width: 42px; height: 20px; display: grid; place-items: center; background: #c83d4d; color: #fff; }
.dialog-close svg { width: 12px; height: 12px; }
.dialog-body { padding: 10px 8px 5px; background: radial-gradient(ellipse 32px 12px at 12px 100%, #3a4c5d, #71807f 60%, transparent), linear-gradient(90deg, #f9e6c4, #efe3c4); }
.row, .row-top { display: grid; grid-template-columns: 57px 1fr; align-items: center; }
.row label, .row-top label { white-space: nowrap; }
.box { width: 100%; min-width: 0; height: 17px; padding: 0 1px; background: #fff; border: 1px solid #f7f0df; border-top: 2px solid #777; border-left: 2px solid #777; outline: 0; }
.row-top { grid-template-columns: 50px 140px; height: 17px; margin-bottom: 6px; }
.limits { position: relative; margin: 0 0 3px -1px; padding: 3px 2px 0 1px; border: 1px solid #b5aa93; }
.limits legend { padding: 0 4px; margin-left: 4px; line-height: 14px; }
.limit-head { display: flex; align-items: center; gap: 23px; height: 16px; }
.limit-head::after { content: ""; flex: 1; border-top: 1px solid #b5aa93; }
.row { height: 20px; }
.row-value { height: 26px; }
select.box { appearance: none; height: 20px; border: 2px solid #777; border-right-color: #aaa; border-bottom-color: #aaa; background: linear-gradient(45deg, transparent 50%, #111 50%) right 7px center / 4px 4px no-repeat, linear-gradient(-45deg, transparent 50%, #111 50%) right 3px center / 4px 4px no-repeat, #fff; }
.spinner { position: relative; display: flex; height: 18px; padding: 0 4px 0 1px; }
.spinner .box { flex: 1; height: 18px; padding: 0 2px; }
.caret { position: absolute; left: 38px; top: 3px; width: 1px; height: 12px; background: #111; }
.steps { display: flex; flex-direction: column; width: 16px; border: 1px solid #777; }
.step { flex: 1; display: grid; place-items: center; background: #d9d6d8; border-bottom: 1px solid #777; }
.step::before { content: ""; border: 3px solid transparent; border-top: 0; border-bottom: 4px solid #111; }
.step-down { border-bottom: 0; }
.step-down::before { border: 3px solid transparent; border-bottom: 0; border-top: 4px solid #111; }
.push { display: flex; align-items: center; justify-content: center; height: 19px; flex: 1; background: #cfcadf; border: 1px solid #f5f0f4; border-right: 2px solid #77738c; border-bottom: 2px solid #77738c; }
.push span { flex: 1; }
.push-reverse { width: 99px; margin-left: 1px; }
.actions { display: flex; gap: 7px; margin-top: 8px; margin-left: -1px; }
.push-default { border-color: #555262; }
.lamp { width: 10px; height: 10px; margin-left: 6px; border-radius: 50%; }
.lamp-green { background: radial-gradient(circle at 3px 3px, #d7ffd2, #2aac35 50%, #116020); }
.lamp-red { background: radial-gradient(circle at 3px 3px, #ffd2d6, #d7293d 50%, #85131e); }
.pointer { position: absolute; left: 86px; top: 232px; width: 12px; height: 18px; }

.sidebar { flex: none; width: 34px; padding: 4px 0 0 5px; background: linear-gradient(90deg, #fff 0, #fff 4px, #d1d0e7 8px, #cbc9e2 26px, #b4b3ca); }
.stack { position: relative; padding: 8px 0 9px 1px; }
.stack::before { content: ""; position: absolute; left: 0; top: 0; width: 15px; height: 2px; background: #fff; border-bottom: 1px solid #9797a9; }
.stack .drop { height: 28px; padding-bottom: 2px; }
.sidebar .drop::after { right: -2px; }
.stack-tight { padding-bottom: 2px; }
.stack-full { padding-top: 5px; padding-bottom: 4px; }
.stack-full::before { width: 29px; }
.stack-last { display: flex; justify-content: flex-end; padding: 18px 3px 0 0; }

.status { display: flex; align-items: center; flex: none; height: 20px; padding-left: 3px; background: #cbcae2; }
.status-message { flex: 1; }
.status-label { margin-right: 3px; }
.power { width: 281px; height: 19px; padding: 0 2px; border: 2px solid #777888; border-right-color: #fff; border-bottom-color: #fff; background: #fff; outline: 0; }
.status-btn { display: grid; place-items: center; width: 17px; height: 14px; margin: 0 7px 0 8px; border: 1px solid #fff; border-right-color: #666; border-bottom-color: #666; background: #c5c4d3; }
.status-btn svg { width: 13px; height: 11px; }
.status-off { margin: 0 5px 0 9px; opacity: 0.7; }
```
